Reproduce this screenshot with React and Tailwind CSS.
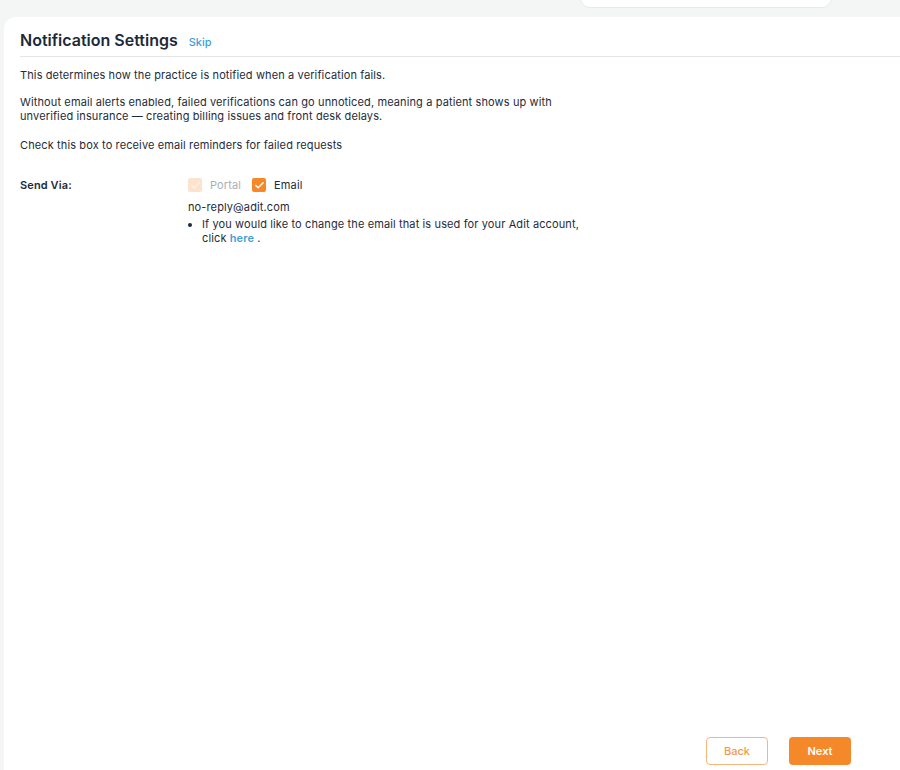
import { Check } from 'lucide-react';

function Box({ disabled }) {
  return (
    <span
      className={`flex h-[14px] w-[14px] items-center justify-center rounded-[2px] ${
        disabled ? 'bg-[#fbe3cd]' : 'bg-[#f5892a]'
      }`}
    >
      <Check size={11} strokeWidth={3} className={disabled ? 'text-[#fdf1e6]' : 'text-white'} />
    </span>
  );
}

export default function App() {
  return (
    <div className="flex h-[770px] w-[900px] flex-col overflow-hidden bg-[#f4f5f5] font-['Inter',sans-serif] text-[#1e2b3a]">
      {/* top bar */}
      <div className="flex h-[17px] shrink-0 items-end justify-end overflow-hidden pb-[9px] pr-[68px]">
        <div className="h-[30px] w-[252px] shrink-0 rounded-[10px] border border-[#e8eaea] bg-white"></div>
      </div>

      {/* card */}
      <div className="ml-[4px] flex flex-1 flex-col rounded-tl-[12px] bg-white">
        <div className="pl-[16px] pt-[11px]">
          <div className="flex items-baseline gap-[11px] pb-[4px]">
            <h1 className="text-[16px] font-semibold text-[#1c2a39]">Notification Settings</h1>
            <span className="text-[11px] font-medium text-[#3f9fd6]">Skip</span>
          </div>
          <div className="h-px bg-[#e3e5e7]"></div>
        </div>

        <div className="px-[16px] pt-[11px] text-[11px] leading-[14px] tracking-[0.12px]">
          <p>This determines how the practice is notified when a verification fails.</p>
          <p className="mt-[13px] w-[570px]">
            Without email alerts enabled, failed verifications can go unnoticed, meaning a patient shows up with
            unverified insurance — creating billing issues and front desk delays.
          </p>
          <p className="mt-[15px]">Check this box to receive email reminders for failed requests</p>

          <div className="mt-[26px] flex">
            <div className="w-[168px] font-semibold">Send Via:</div>
            <div>
              <div className="flex items-center">
                <Box disabled />
                <span className="ml-[8px] text-[#a9b0b8]">Portal</span>
                <span className="ml-[11px]">
                  <Box />
                </span>
                <span className="ml-[8px]">Email</span>
              </div>
              <div className="mt-[8px]">no-reply@adit.com</div>
              <ul className="mt-[3px] w-[410px] list-disc pl-[14px]">
                <li>
                  If you would like to change the email that is used for your Adit account, click{' '}
                  <span className="font-semibold text-[#3f9fd6]">here</span>
                  <span className="ml-[3px]">.</span>
                </li>
              </ul>
            </div>
          </div>
        </div>

        <div className="mt-auto flex justify-end gap-[21px] pb-[5px] pr-[49px]">
          <button className="h-[28px] w-[62px] rounded-[4px] border border-[#f6b77c] bg-white text-[11px] font-medium text-[#f2994a]">
            Back
          </button>
          <button className="h-[28px] w-[62px] rounded-[4px] bg-[#f5892a] text-[11px] font-semibold text-white">
            Next
          </button>
        </div>
      </div>
    </div>
  );
}
